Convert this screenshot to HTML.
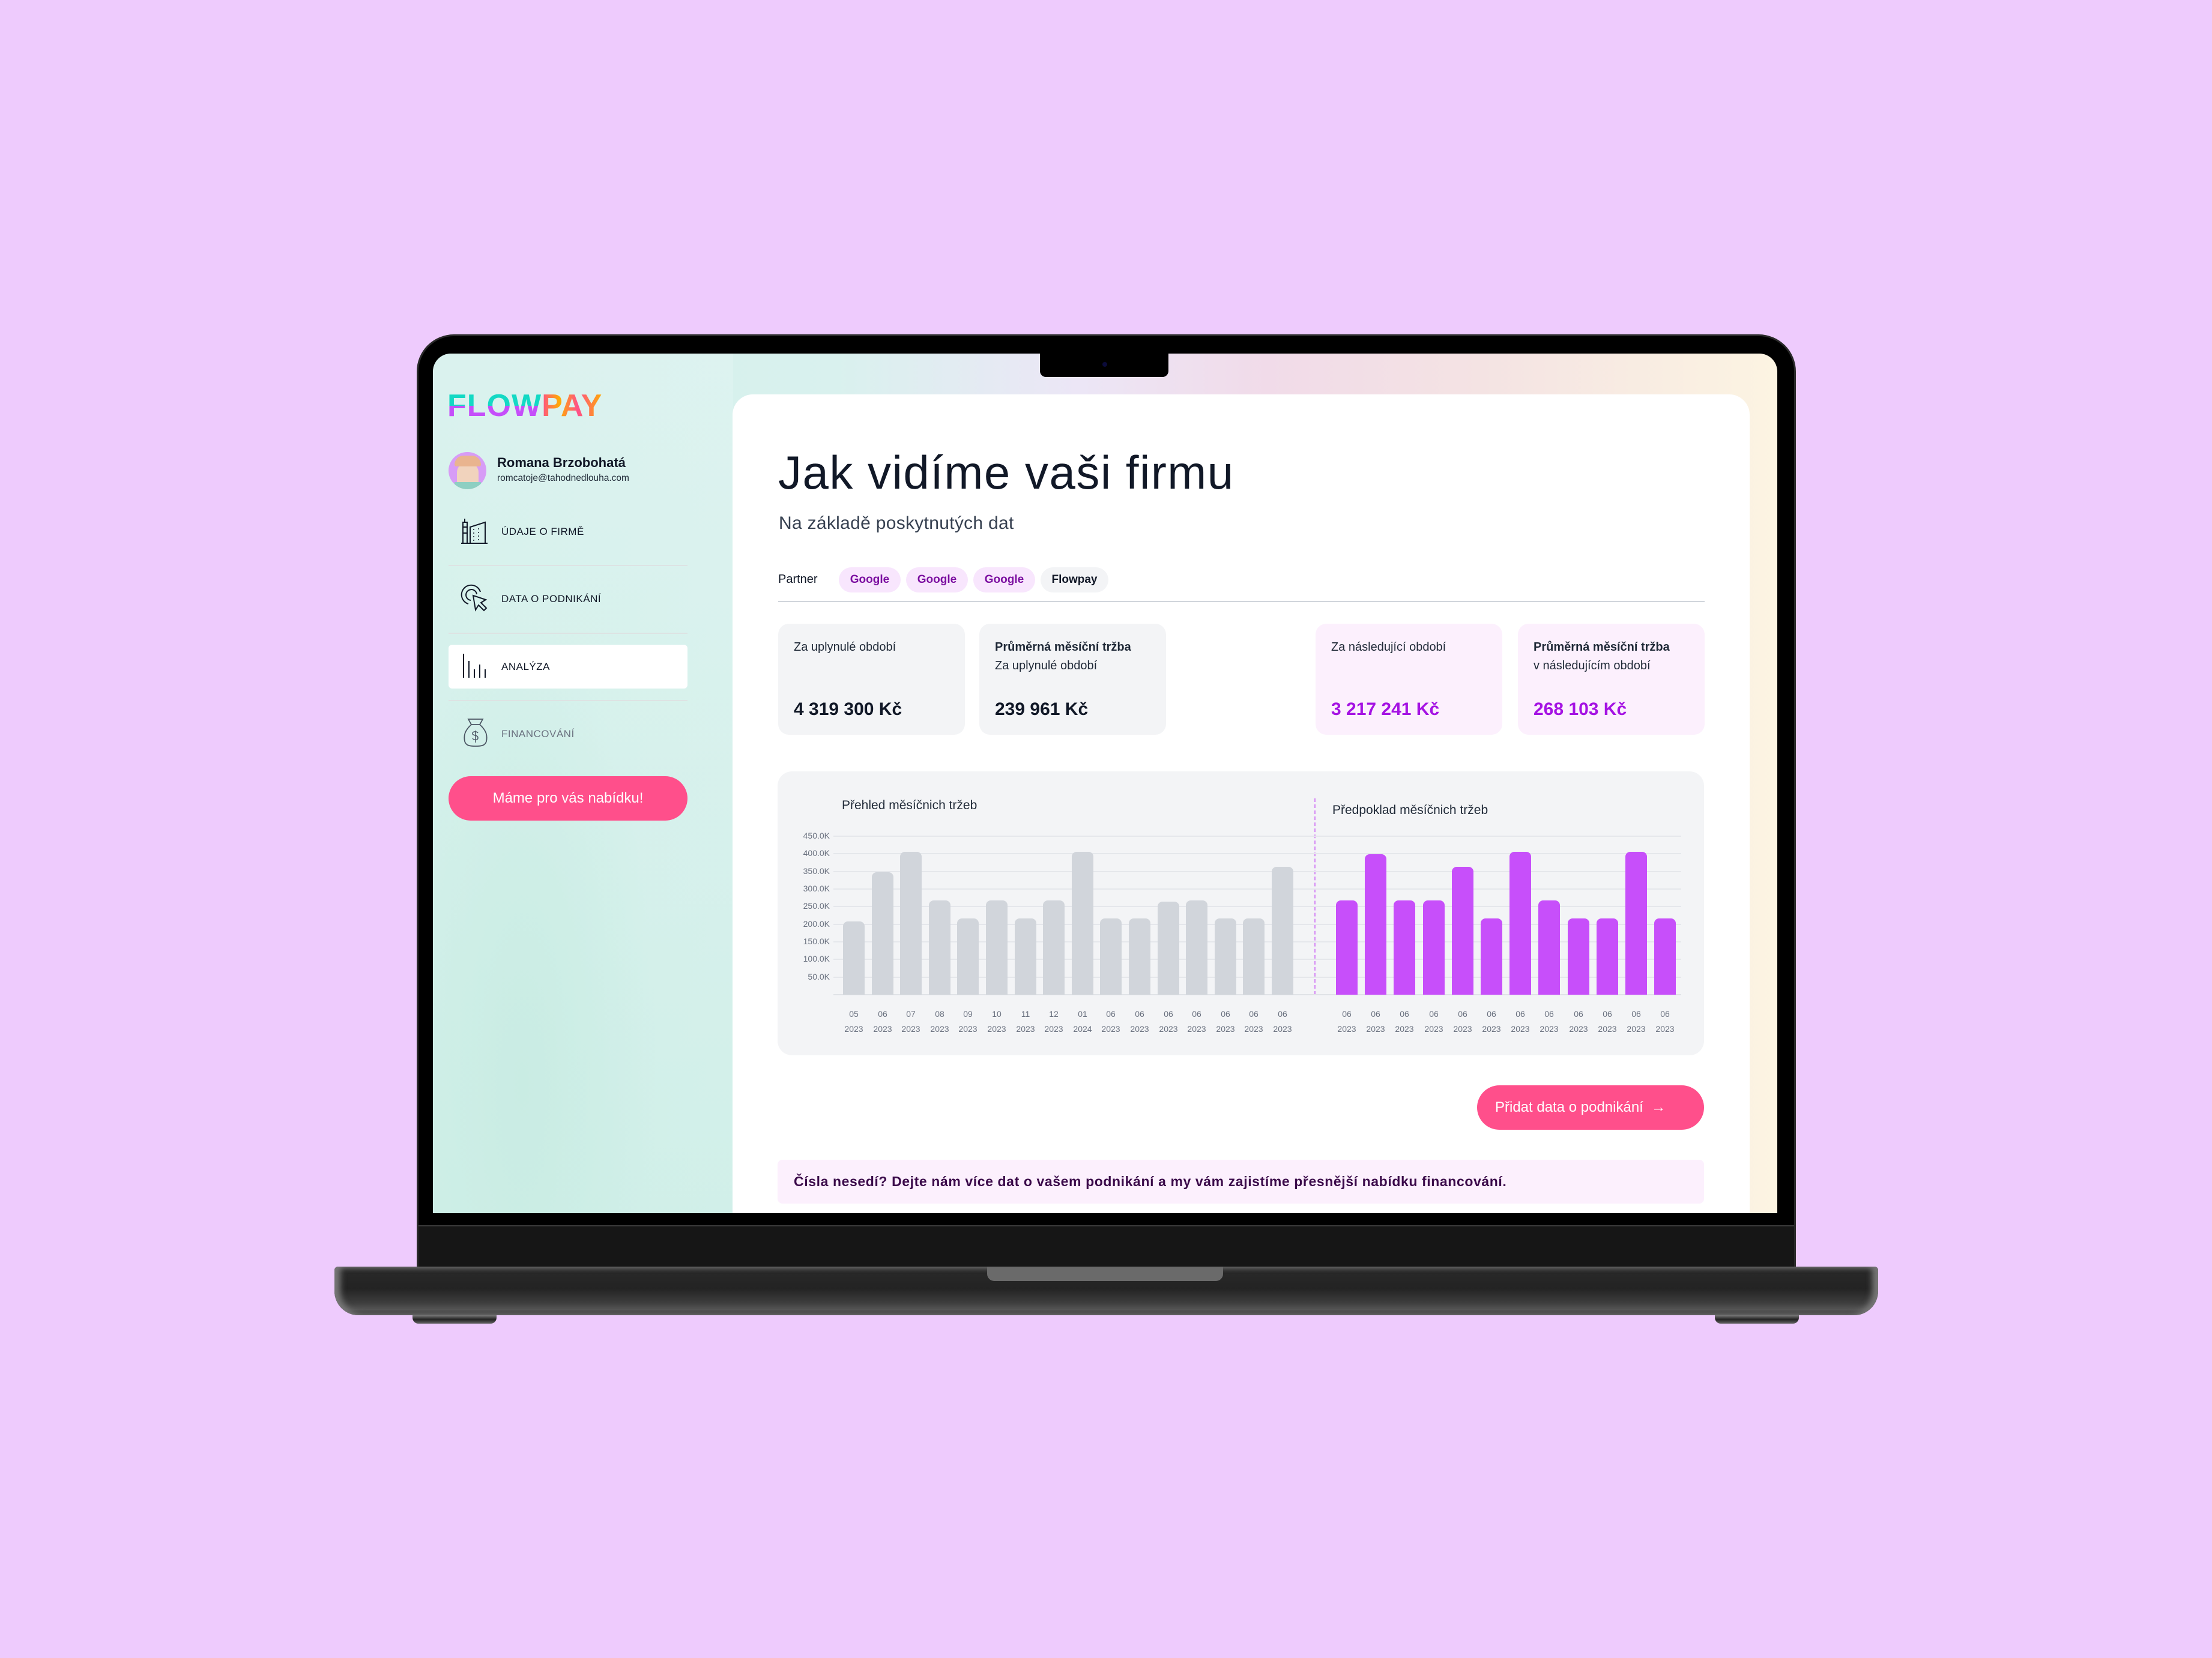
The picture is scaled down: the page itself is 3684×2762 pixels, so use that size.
<!DOCTYPE html>
<html><head><meta charset="utf-8">
<style>
*{margin:0;padding:0;box-sizing:border-box}
body{width:3684px;height:2762px;background:#eecbfd;position:relative;overflow:hidden;font-family:"Liberation Sans",sans-serif;color:#111827}
.a{position:absolute}
.bez{left:694px;top:557px;width:2297px;height:1553px;background:#000;border-radius:62px 62px 0 0;border:3px solid #2a2a2a;border-bottom:none}
.chin{left:697px;top:2041px;width:2291px;height:69px;background:#161616;border-top:2px solid #3a3a3a}
.screen{left:721px;top:589px;width:2239px;height:1432px;border-radius:30px 30px 0 0;overflow:hidden;background:linear-gradient(90deg,#d2f0ea 0%,#d9f1ee 30%,#ece6f6 48%,#f1dbe9 62%,#f4e3e3 78%,#fcf4e2 100%)}
.side{left:0;top:0;width:500px;height:1432px;background:radial-gradient(ellipse at 30% 85%,#c9ece3 0%,rgba(210,240,234,0) 45%),linear-gradient(180deg,rgba(230,246,244,.4),rgba(205,238,230,.6))}
.card{left:499px;top:68px;width:1694px;height:1400px;background:#fff;border-radius:34px 34px 0 0}
.notch{left:1732px;top:586px;width:214px;height:42px;background:#000;border-radius:0 0 10px 10px}
.cam{left:1836px;top:603px;width:8px;height:8px;border-radius:50%;background:#0b0b3a}
.base{left:557px;top:2110px;width:2571px;height:81px;border-radius:6px 6px 40px 40px;background:linear-gradient(180deg,#2a2a2a 0%,#232323 45%,#3e3e3e 75%,#555 88%,#2a2a2a 100%);box-shadow:inset 10px 0 10px #777,inset -10px 0 10px #777}
.hinge{left:1644px;top:2110px;width:393px;height:24px;background:#6a6a6a;border-radius:0 0 12px 12px}
.foot{top:2191px;width:140px;height:14px;background:linear-gradient(180deg,#777,#222,#666);border-radius:0 0 10px 10px}
.nav{font-size:17px;letter-spacing:.5px;color:#111827}
.div{height:2px;background:#dde3e3;width:398px;left:747px}
.chip{top:945px;height:42px;border-radius:21px;background:#f8e6fd;color:#7b0ea0;font-size:19px;font-weight:bold;line-height:42px;text-align:center}
.kc{top:1039px;width:311px;height:185px;border-radius:18px;background:#f3f4f6;padding:24px 26px}
.kc .l{font-size:20px;line-height:31px;color:#1f2937}
.kc .v{position:absolute;left:26px;top:126px;font-size:30px;font-weight:bold}
.gb{background:#d1d5db;width:36px;border-radius:8px 8px 0 0}
.pb{background:#c74ffa;width:36px;border-radius:8px 8px 0 0}
.gl{height:2px;background:#e5e7eb;left:1388px;width:1412px}
.yl{font-size:14px;color:#6b7280;width:60px;text-align:right;left:1322px}
.xl{font-size:14px;color:#6b7280;width:50px;text-align:center;line-height:25px;top:1677px}
</style></head><body>
<div class="a bez"></div>
<div class="a chin"></div>
<div class="a screen">
  <div class="a side"></div>
  <div class="a card"></div>
</div>
<div class="a notch"></div><div class="a cam"></div>
<div class="a base"></div><div class="a hinge"></div>
<div class="a foot" style="left:687px"></div><div class="a foot" style="left:2856px"></div>

<div class="a" style="left:745px;top:650px;font-size:52px;font-weight:bold;letter-spacing:1px;line-height:52px">
<span style="background:linear-gradient(180deg,#14d9c4 50%,#c54ffa 50%);-webkit-background-clip:text;background-clip:text;color:transparent">FLOW</span><span style="background:linear-gradient(90deg,#ff4f8b 0%,#ffad00 30%,#ff4f8b 60%,#ffad00 100%);-webkit-background-clip:text;background-clip:text;color:transparent">PAY</span></div>

<div class="a" style="left:747px;top:753px;width:63px;height:62px;border-radius:50%;background:#d79cf6;overflow:hidden">
  <div class="a" style="left:14px;top:18px;width:36px;height:44px;border-radius:16px 16px 8px 8px;background:#f1d3bd"></div>
  <div class="a" style="left:10px;top:6px;width:44px;height:18px;border-radius:20px 20px 4px 4px;background:#e9b48f"></div>
  <div class="a" style="left:10px;top:50px;width:44px;height:14px;background:#8ecfc2"></div>
</div>
<div class="a" style="left:828px;top:758px;font-size:22px;font-weight:bold">Romana Brzobohatá</div>
<div class="a" style="left:828px;top:788px;font-size:15.5px;color:#1f2937">romcatoje@tahodnedlouha.com</div>

<svg class="a" style="left:768px;top:864px" width="46" height="42" viewBox="0 0 46 42" fill="none" stroke="#111827" stroke-width="2"><path d="M3 41V6M10 41V6M3 14h7M3 24h7M6 0v6M2 6h9M15 41V14l25-8v35zM0 41h44"/><path d="M20 18h2M28 17h2M20 24h2M28 23h2M20 30h2M28 29h2M20 36h2M28 35h2" stroke-width="1.5"/></svg>
<div class="a nav" style="left:835px;top:876px">ÚDAJE O FIRMĚ</div>
<div class="a div" style="top:941px"></div>
<svg class="a" style="left:766px;top:972px" width="50" height="48" viewBox="0 0 50 48" fill="none" stroke="#111827" stroke-width="2"><path d="M14 34A16 16 0 1 1 34 14"/><path d="M18 28A9 9 0 1 1 28 18"/><path d="M22 20l4 24 5-8 9 9 4-4-9-9 8-5z"/></svg>
<div class="a nav" style="left:835px;top:988px">DATA O PODNIKÁNÍ</div>
<div class="a div" style="top:1054px"></div>
<div class="a" style="left:747px;top:1074px;width:398px;height:73px;background:#fff;border-radius:6px"></div>
<svg class="a" style="left:770px;top:1089px" width="42" height="42" viewBox="0 0 42 42" stroke="#111827" stroke-width="2"><path d="M2 0v40M11 12v28M20 26v14M29 18v22M38 26v14"/></svg>
<div class="a nav" style="left:835px;top:1101px">ANALÝZA</div>
<div class="a div" style="top:1166px"></div>
<svg class="a" style="left:772px;top:1195px" width="40" height="50" viewBox="0 0 40 50" fill="none" stroke="#4b5563" stroke-width="1.8"><path d="M13 12L8 3h24l-5 9M12 12h16M13 12C2 22 0 30 2 40c2 7 8 8 18 8s16-1 18-8c2-10 0-18-11-28"/><path d="M24 26c-2-3-9-3-9 1s9 2 9 7-7 4-9 1M20 22v20" stroke-width="1.5"/></svg>
<div class="a nav" style="left:835px;top:1213px;color:#6b7280">FINANCOVÁNÍ</div>
<div class="a" style="left:747px;top:1293px;width:398px;height:74px;border-radius:37px;background:#ff4f8b;color:#fff;font-size:24px;text-align:center;line-height:74px">Máme pro vás nabídku!</div>

<div class="a" style="left:1296px;top:742px;font-size:78px;color:#111827;letter-spacing:1.5px">Jak vidíme vaši firmu</div>
<div class="a" style="left:1297px;top:855px;font-size:30px;color:#374151;letter-spacing:.3px">Na základě poskytnutých dat</div>
<div class="a" style="left:1296px;top:954px;font-size:20px;color:#111827">Partner</div>
<div class="a chip" style="left:1397px;width:103px">Google</div>
<div class="a chip" style="left:1509px;width:103px">Google</div>
<div class="a chip" style="left:1621px;width:103px">Google</div>
<div class="a chip" style="left:1733px;width:113px;background:#f3f4f6;color:#111827">Flowpay</div>
<div class="a" style="left:1296px;top:1001px;width:1543px;height:2px;background:#d1d5db"></div>

<div class="a kc" style="left:1296px"><div class="l">Za uplynulé období</div><div class="v">4 319 300 Kč</div></div>
<div class="a kc" style="left:1631px"><div class="l"><b>Průměrná měsíční tržba</b><br>Za uplynulé období</div><div class="v">239 961 Kč</div></div>
<div class="a kc" style="left:2191px;background:#fcf0fd"><div class="l">Za následující období</div><div class="v" style="color:#a513e3">3 217 241 Kč</div></div>
<div class="a kc" style="left:2528px;background:#fcf0fd"><div class="l"><b>Průměrná měsíční tržba</b><br>v následujícím období</div><div class="v" style="color:#a513e3">268 103 Kč</div></div>

<div class="a" style="left:1295px;top:1285px;width:1543px;height:473px;background:#f3f4f6;border-radius:24px"></div>
<div class="a" style="left:1402px;top:1330px;font-size:21px;color:#1f2937">Přehled měsíčnich tržeb</div>
<div class="a" style="left:2219px;top:1338px;font-size:21px;color:#1f2937">Předpoklad měsíčnich tržeb</div>
<div class="a" style="left:2189px;top:1330px;height:327px;border-left:2px dashed #d58af5"></div>
<div class="a gl" style="top:1392px"></div><div class="a gl" style="top:1421px"></div><div class="a gl" style="top:1451px"></div><div class="a gl" style="top:1480px"></div><div class="a gl" style="top:1509px"></div><div class="a gl" style="top:1539px"></div><div class="a gl" style="top:1568px"></div><div class="a gl" style="top:1597px"></div><div class="a gl" style="top:1627px"></div><div class="a gl" style="top:1656px;background:#e0e2e6"></div>
<div class="a yl" style="top:1384px">450.0K</div><div class="a yl" style="top:1413px">400.0K</div><div class="a yl" style="top:1443px">350.0K</div><div class="a yl" style="top:1472px">300.0K</div><div class="a yl" style="top:1501px">250.0K</div><div class="a yl" style="top:1531px">200.0K</div><div class="a yl" style="top:1560px">150.0K</div><div class="a yl" style="top:1589px">100.0K</div><div class="a yl" style="top:1619px">50.0K</div>

<div class="a gb" style="left:1404px;top:1535px;height:122px"></div>
<div class="a gb" style="left:1452px;top:1453px;height:204px"></div>
<div class="a gb" style="left:1499px;top:1419px;height:238px"></div>
<div class="a gb" style="left:1547px;top:1500px;height:157px"></div>
<div class="a gb" style="left:1594px;top:1530px;height:127px"></div>
<div class="a gb" style="left:1642px;top:1500px;height:157px"></div>
<div class="a gb" style="left:1690px;top:1530px;height:127px"></div>
<div class="a gb" style="left:1737px;top:1500px;height:157px"></div>
<div class="a gb" style="left:1785px;top:1419px;height:238px"></div>
<div class="a gb" style="left:1832px;top:1530px;height:127px"></div>
<div class="a gb" style="left:1880px;top:1530px;height:127px"></div>
<div class="a gb" style="left:1928px;top:1502px;height:155px"></div>
<div class="a gb" style="left:1975px;top:1500px;height:157px"></div>
<div class="a gb" style="left:2023px;top:1530px;height:127px"></div>
<div class="a gb" style="left:2070px;top:1530px;height:127px"></div>
<div class="a gb" style="left:2118px;top:1444px;height:213px"></div>

<div class="a xl" style="left:1397px">05<br>2023</div>
<div class="a xl" style="left:1445px">06<br>2023</div>
<div class="a xl" style="left:1492px">07<br>2023</div>
<div class="a xl" style="left:1540px">08<br>2023</div>
<div class="a xl" style="left:1587px">09<br>2023</div>
<div class="a xl" style="left:1635px">10<br>2023</div>
<div class="a xl" style="left:1683px">11<br>2023</div>
<div class="a xl" style="left:1730px">12<br>2023</div>
<div class="a xl" style="left:1778px">01<br>2024</div>
<div class="a xl" style="left:1825px">06<br>2023</div>
<div class="a xl" style="left:1873px">06<br>2023</div>
<div class="a xl" style="left:1921px">06<br>2023</div>
<div class="a xl" style="left:1968px">06<br>2023</div>
<div class="a xl" style="left:2016px">06<br>2023</div>
<div class="a xl" style="left:2063px">06<br>2023</div>
<div class="a xl" style="left:2111px">06<br>2023</div>

<div class="a pb" style="left:2225px;top:1500px;height:157px"></div>
<div class="a pb" style="left:2273px;top:1423px;height:234px"></div>
<div class="a pb" style="left:2321px;top:1500px;height:157px"></div>
<div class="a pb" style="left:2370px;top:1500px;height:157px"></div>
<div class="a pb" style="left:2418px;top:1444px;height:213px"></div>
<div class="a pb" style="left:2466px;top:1530px;height:127px"></div>
<div class="a pb" style="left:2514px;top:1419px;height:238px"></div>
<div class="a pb" style="left:2562px;top:1500px;height:157px"></div>
<div class="a pb" style="left:2611px;top:1530px;height:127px"></div>
<div class="a pb" style="left:2659px;top:1530px;height:127px"></div>
<div class="a pb" style="left:2707px;top:1419px;height:238px"></div>
<div class="a pb" style="left:2755px;top:1530px;height:127px"></div>

<div class="a xl" style="left:2218px">06<br>2023</div>
<div class="a xl" style="left:2266px">06<br>2023</div>
<div class="a xl" style="left:2314px">06<br>2023</div>
<div class="a xl" style="left:2363px">06<br>2023</div>
<div class="a xl" style="left:2411px">06<br>2023</div>
<div class="a xl" style="left:2459px">06<br>2023</div>
<div class="a xl" style="left:2507px">06<br>2023</div>
<div class="a xl" style="left:2555px">06<br>2023</div>
<div class="a xl" style="left:2604px">06<br>2023</div>
<div class="a xl" style="left:2652px">06<br>2023</div>
<div class="a xl" style="left:2700px">06<br>2023</div>
<div class="a xl" style="left:2748px">06<br>2023</div>

<div class="a" style="left:2460px;top:1808px;width:378px;height:74px;border-radius:37px;background:#ff4f8b;color:#fff;font-size:24px;line-height:74px;padding-left:30px">Přidat data o podnikání &nbsp;→</div>
<div class="a" style="left:1295px;top:1932px;width:1543px;height:73px;background:#fcf0fd;border-radius:8px;padding-left:27px;line-height:73px;font-size:23px;letter-spacing:.6px;font-weight:bold;color:#3b0a4a">Čísla nesedí? Dejte nám více dat o vašem podnikání a my vám zajistíme přesnější nabídku financování.</div>
</body></html>
